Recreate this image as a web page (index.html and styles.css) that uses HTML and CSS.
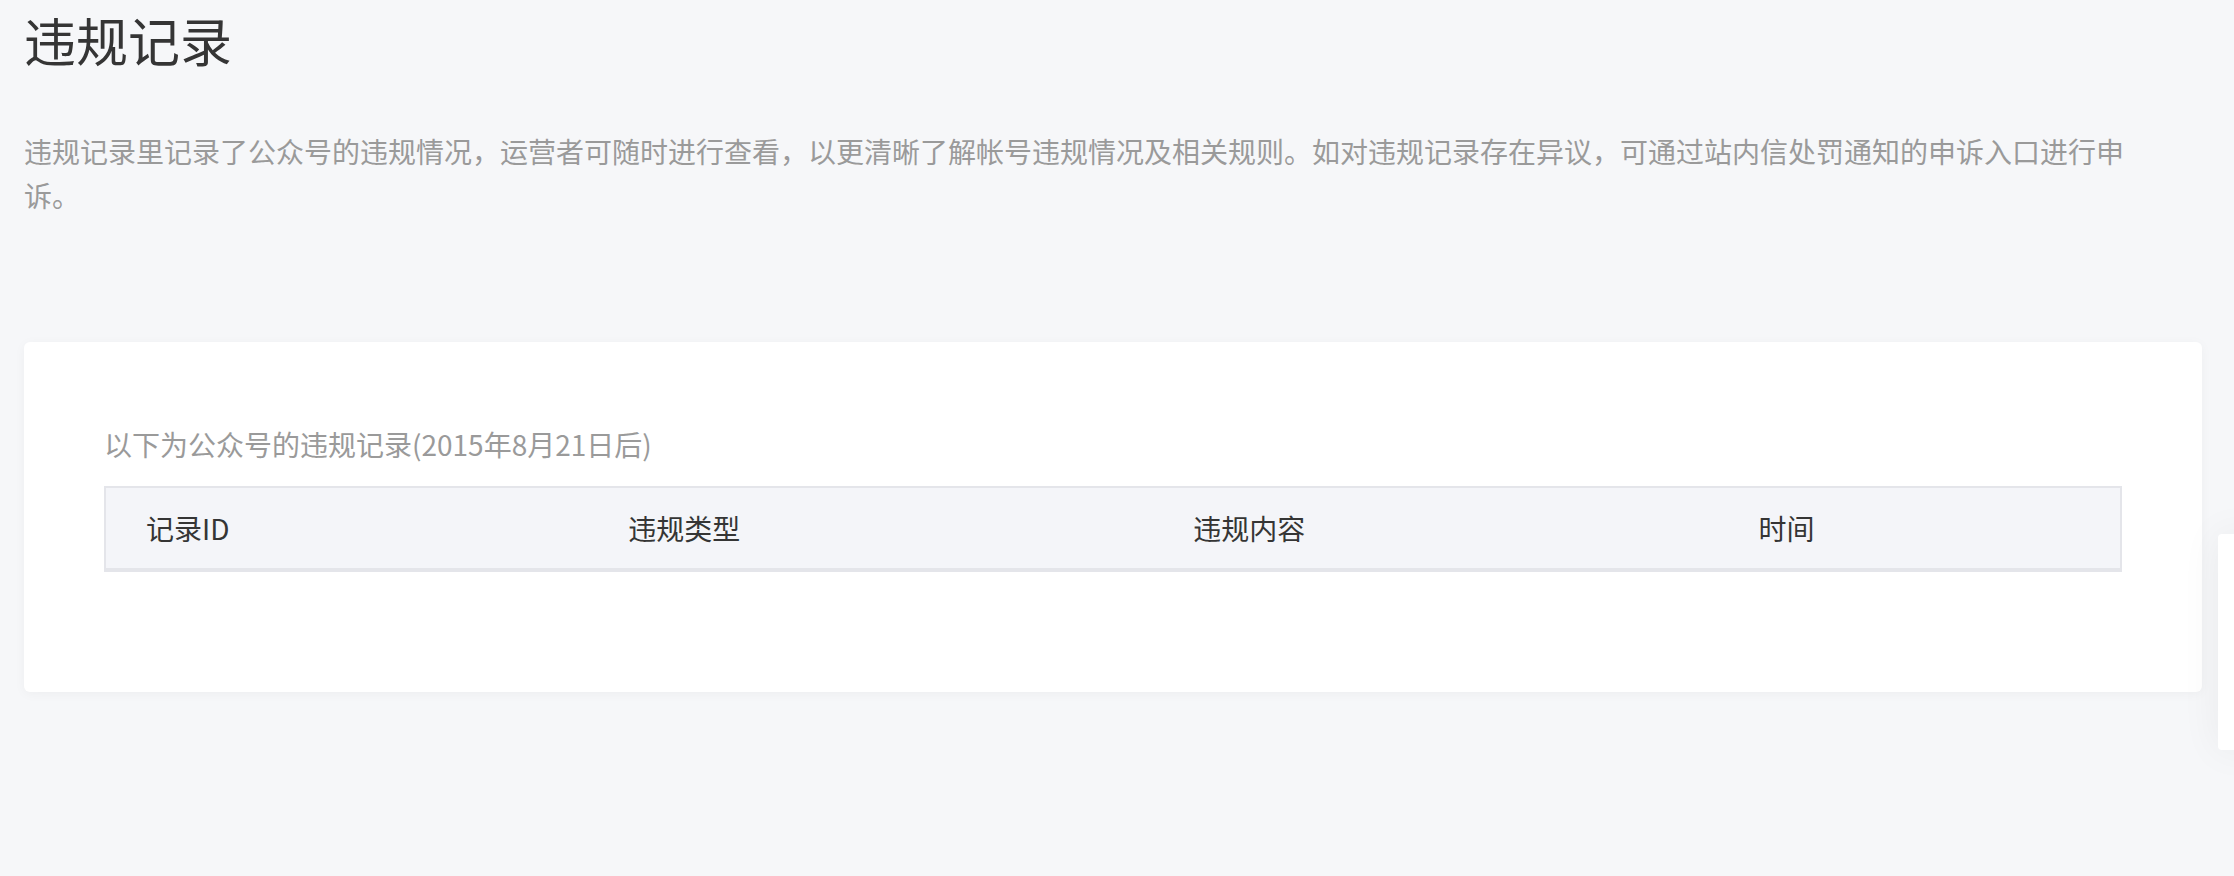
FILE: index.html
```html
<!DOCTYPE html>
<html lang="zh-CN">
<head>
<meta charset="utf-8">
<title>违规记录</title>
<link rel="stylesheet" href="styles.css">
</head>
<body>
<main class="page">
  <h1 class="page-title">违规记录</h1>
  <p class="page-desc">违规记录里记录了公众号的违规情况，运营者可随时进行查看，以更清晰了解帐号违规情况及相关规则。如对违规记录存在异议，可通过站内信处罚通知的申诉入口进行申诉。</p>
  <section class="card">
    <div class="card-label">以下为公众号的违规记录(2015年8月21日后)</div>
    <table class="record-table">
      <colgroup>
        <col class="col-id">
        <col class="col-type">
        <col class="col-content">
        <col class="col-time">
      </colgroup>
      <thead>
        <tr>
          <th>记录ID</th>
          <th>违规类型</th>
          <th>违规内容</th>
          <th>时间</th>
        </tr>
      </thead>
      <tbody></tbody>
    </table>
  </section>
</main>
<div class="side-panel"></div>
</body>
</html>
```
FILE: styles.css
```css
html, body {
  margin: 0;
  padding: 0;
  background: #f6f7f9;
}
body {
  font-family: "Noto Sans CJK SC", "Noto Sans", sans-serif;
  color: #353535;
  width: 2234px;
  height: 876px;
  overflow: hidden;
  position: relative;
}
.page {
  padding: 0 32px 0 24px;
}
.page-title {
  margin: 0;
  font-size: 52px;
  font-weight: 400;
  line-height: 80px;
  color: #353535;
}
.page-desc {
  margin: 49px 0 0;
  width: 2112px;
  font-size: 28px;
  line-height: 44px;
  color: #9a9a9a;
}
.card {
  margin-top: 125px;
  background: #fff;
  border-radius: 6px;
  box-shadow: 0 2px 12px rgba(0, 0, 0, 0.04);
  padding: 82px 80px 120px;
}
.card-label {
  font-size: 28px;
  line-height: 40px;
  color: #9a9a9a;
}
.record-table {
  margin-top: 22px;
  width: 100%;
  border-collapse: separate;
  border-spacing: 0;
  table-layout: fixed;
}
.col-id { width: 24%; }
.col-type { width: 28%; }
.col-content { width: 28%; }
.col-time { width: 20%; }
.record-table th {
  background: #f4f5f9;
  font-size: 28px;
  font-weight: 400;
  color: #353535;
  text-align: left;
  height: 80px;
  padding: 0 0 0 40px;
  border-top: 2px solid #e4e5ea;
  border-bottom: 4px solid #e4e5ea;
}
.record-table th:first-child {
  border-left: 2px solid #e4e5ea;
}
.record-table th:last-child {
  border-right: 2px solid #e4e5ea;
}
.side-panel {
  position: absolute;
  left: 2218px;
  top: 534px;
  width: 40px;
  height: 216px;
  background: #fff;
  border-radius: 4px;
  box-shadow: 0 0 40px rgba(0, 0, 0, 0.06);
}
```
